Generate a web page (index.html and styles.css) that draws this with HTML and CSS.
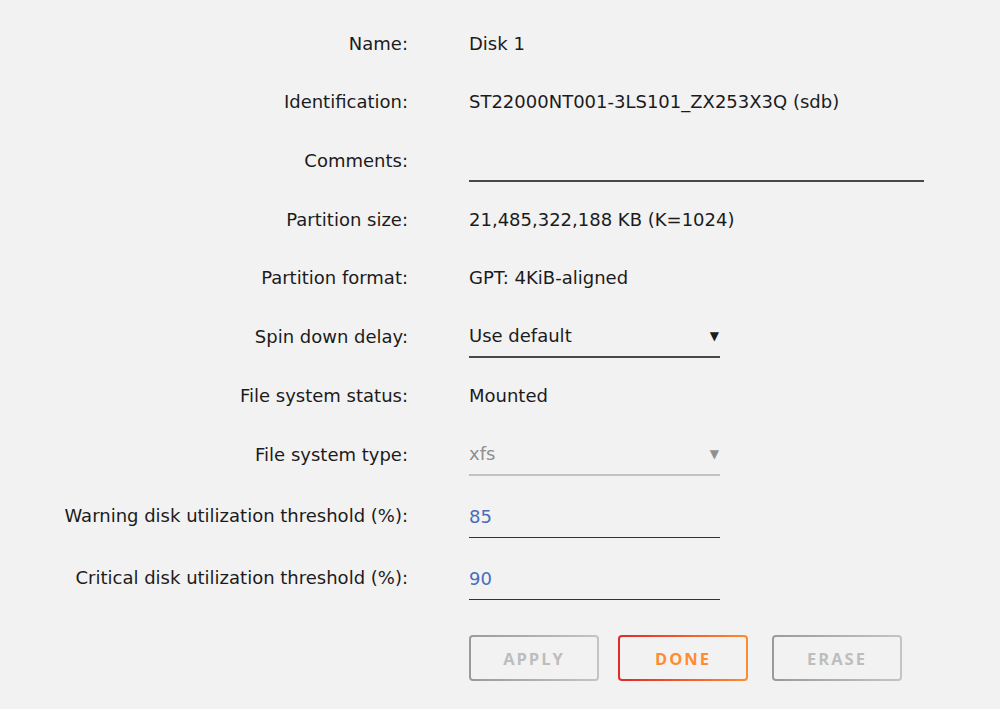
FILE: index.html
```html
<!DOCTYPE html>
<html lang="en">
<head>
    <meta charset="UTF-8">
    <title>Disk 1 Settings</title>
    <link rel="stylesheet" href="styles.css">
</head>
<body>
    <form class="settings">
        <div class="row">
            <div class="label">Name:</div>
            <div class="value">Disk 1</div>
        </div>
        <div class="row">
            <div class="label">Identification:</div>
            <div class="value">ST22000NT001-3LS101_ZX253X3Q (sdb)</div>
        </div>
        <div class="row row-input">
            <div class="label">Comments:</div>
            <div class="value"><input type="text" class="field field-wide" value=""></div>
        </div>
        <div class="row">
            <div class="label">Partition size:</div>
            <div class="value">21,485,322,188 KB (K=1024)</div>
        </div>
        <div class="row">
            <div class="label">Partition format:</div>
            <div class="value">GPT: 4KiB-aligned</div>
        </div>
        <div class="row row-input">
            <div class="label">Spin down delay:</div>
            <div class="value">
                <div class="select">
                    <span>Use default</span>
                    <span class="arrow">&#9660;</span>
                </div>
            </div>
        </div>
        <div class="row">
            <div class="label">File system status:</div>
            <div class="value">Mounted</div>
        </div>
        <div class="row row-input">
            <div class="label">File system type:</div>
            <div class="value">
                <div class="select disabled">
                    <span>xfs</span>
                    <span class="arrow">&#9660;</span>
                </div>
            </div>
        </div>
        <div class="row row-input row-tall">
            <div class="label">Warning disk utilization threshold (%):</div>
            <div class="value"><input type="text" class="field field-num" value="85"></div>
        </div>
        <div class="row row-input row-tall">
            <div class="label">Critical disk utilization threshold (%):</div>
            <div class="value"><input type="text" class="field field-num" value="90"></div>
        </div>
        <div class="buttons">
            <button type="button" class="btn btn-grey">Apply</button>
            <button type="button" class="btn btn-done">Done</button>
            <button type="button" class="btn btn-grey btn-erase">Erase</button>
        </div>
    </form>
</body>
</html>
```

FILE: styles.css
```css
:root {
    --bg: #f2f2f2;
    --text: #1c1b1b;
    --muted: #8f8f8f;
    --blue: #486dba;
    --orange: #ff8c2f;
    --red: #e22828;
}

* {
    margin: 0;
    padding: 0;
    box-sizing: border-box;
}

body {
    background: var(--bg);
    color: var(--text);
    font-family: 'DejaVu Sans', 'Open Sans', sans-serif;
    font-size: 18px;
}

.settings {
    padding-top: 14px;
}

.row {
    display: grid;
    grid-template-columns: 408px 1fr;
    column-gap: 61px;
    align-items: center;
    height: 58px;
}

.row-input {
    height: 60px;
}

.row-tall {
    height: 62px;
}

.label {
    text-align: right;
}

.field {
    display: block;
    height: 44px;
    padding-top: 2px;
    border: none;
    border-bottom: 1px solid #333;
    background: transparent;
    font: inherit;
    color: var(--text);
    outline: none;
}

.field-wide {
    width: 455px;
    border-bottom-width: 2px;
    border-bottom-color: #484848;
}

.field-num {
    width: 251px;
    height: 46px;
    padding-top: 4px;
    color: var(--blue);
}

.select {
    display: flex;
    justify-content: space-between;
    align-items: center;
    width: 251px;
    height: 44px;
    padding-top: 1px;
    border-bottom: 2px solid #484848;
}

.select .arrow {
    font-size: 12px;
    margin-right: 1px;
}

.select.disabled {
    color: var(--muted);
    border-bottom-color: #c2c2c2;
}

.buttons {
    display: flex;
    margin-top: 27px;
    margin-left: 469px;
}

.btn {
    width: 130px;
    height: 46px;
    margin-right: 19px;
    border: 2px solid transparent;
    border-radius: 4px;
    font-family: 'Open Sans', 'Noto Sans', sans-serif;
    font-size: 16.5px;
    font-weight: 700;
    letter-spacing: 2px;
    text-transform: uppercase;
    cursor: pointer;
}

.btn-grey {
    color: #bdbdbd;
    background:
        linear-gradient(var(--bg), var(--bg)) padding-box,
        linear-gradient(90deg, #9a9a9a, #c4c4c4) border-box;
}

.btn-done {
    margin-right: 24px;
    color: var(--orange);
    background:
        linear-gradient(var(--bg), var(--bg)) padding-box,
        linear-gradient(90deg, var(--red), var(--orange)) border-box;
}
```
